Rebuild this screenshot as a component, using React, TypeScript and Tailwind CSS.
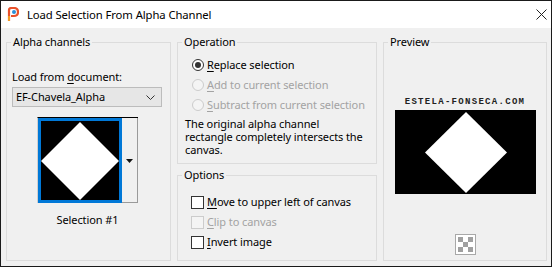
import React from "react";

const font = { fontFamily: '"Noto Sans", "Open Sans", sans-serif' };

function U({ children }: { children: React.ReactNode }) {
  return <span className="underline underline-offset-[2px]">{children}</span>;
}

function Radio({ checked, disabled }: { checked?: boolean; disabled?: boolean }) {
  return (
    <span
      className={
        "flex h-[12px] w-[12px] items-center justify-center rounded-full border " +
        (disabled ? "border-[#cccccc] bg-[#f4f4f4]" : "border-[#333333] bg-white")
      }
    >
      {checked && <span className="h-[6px] w-[6px] rounded-full bg-[#333333]" />}
    </span>
  );
}

function Check({ disabled }: { disabled?: boolean }) {
  return (
    <span
      className={
        "block h-[13px] w-[13px] border " +
        (disabled ? "border-[#cccccc] bg-[#f4f4f4]" : "border-[#333333] bg-white")
      }
    />
  );
}

function Legend({ children }: { children: React.ReactNode }) {
  return <legend className="ml-[4px] px-[2px] leading-[16px] text-black">{children}</legend>;
}

export default function App() {
  return (
    <div
      className="flex h-[267px] w-[552px] flex-col border border-[#1a1a1a] bg-[#f0f0f0] text-[11px] tracking-[-0.1px] text-black"
      style={font}
    >
      {/* Title bar */}
      <div className="flex h-[27px] items-center bg-white">
        <svg className="ml-[6px]" width="12" height="15" viewBox="0 0 12 15">
          <path d="M2 14 V3 Q2 1 5 1 H7 Q11 1 11 5 Q11 9 7 9 H4" fill="none" stroke="#e8512a" strokeWidth="2.2" />
          <circle cx="7" cy="5" r="2" fill="#2a8fd8" />
          <rect x="1" y="9" width="2" height="5" fill="#f39c24" />
        </svg>
        <span className="ml-[8px] text-[11.3px] leading-[16px]">Load Selection From Alpha Channel</span>
        <svg className="ml-auto mr-[4px]" width="11" height="11" viewBox="0 0 11 11">
          <path d="M0.5 0.5 L10.5 10.5 M10.5 0.5 L0.5 10.5" stroke="#222" strokeWidth="1" />
        </svg>
      </div>

      {/* Body */}
      <div className="flex flex-1 gap-[6px] pl-[5px] pt-[6px]">
        {/* Alpha channels */}
        <fieldset className="h-[227px] w-[165px] border border-[#dcdcdc]">
          <Legend>Alpha channels</Legend>
          <div className="ml-[5px] mt-[19px] leading-[16px]">
            Load from <U>d</U>ocument:
          </div>
          <div className="ml-[5px] mt-[2px] flex h-[20px] w-[150px] items-center border border-[#bcbcbc] bg-[#e6e6e6] pl-[3px] pr-[6px]">
            <span className="leading-[16px]">EF-Chavela_Alpha</span>
            <svg className="ml-auto" width="9" height="5" viewBox="0 0 9 5">
              <path d="M0.5 0.5 L4.5 4.5 L8.5 0.5" fill="none" stroke="#333" strokeWidth="1" />
            </svg>
          </div>
          <div className="ml-[30px] mt-[10px] flex h-[86px] w-[101px] border-t border-l border-t-black border-l-[#cfcfcf]">
            <div className="h-full w-[84px] border-[3px] border-[#0078d7] bg-black">
              <svg width="78" height="79" viewBox="0 0 78 79" className="block">
                <polygon points="39,1 78,40 39,79 0,40" fill="white" />
              </svg>
            </div>
            <div className="flex flex-1 items-start justify-center border-r border-b border-[#9a9a9a] bg-[#f0f0f0] pt-[41px]">
              <svg width="7" height="4" viewBox="0 0 7 4">
                <polygon points="0,0 7,0 3.5,4" fill="#111" />
              </svg>
            </div>
          </div>
          <div className="mt-[9px] pr-[2px] text-center leading-[16px]">Selection #1</div>
        </fieldset>

        {/* Middle column */}
        <div className="flex w-[200px] flex-col gap-[3px]">
          <fieldset className="h-[130px] border border-[#dcdcdc]">
            <Legend>Operation</Legend>
            <div className="mt-[5px] flex flex-col">
              <div className="flex h-[20px] items-center gap-[3px] pl-[14px]">
                <Radio checked />
                <span className="leading-[16px]">
                  <U>R</U>eplace selection
                </span>
              </div>
              <div className="flex h-[20px] items-center gap-[3px] pl-[14px] text-[#a3a3a3]">
                <Radio disabled />
                <span className="leading-[16px]">
                  <U>A</U>dd to current selection
                </span>
              </div>
              <div className="flex h-[20px] items-center gap-[3px] pl-[14px] text-[#a3a3a3]">
                <Radio disabled />
                <span className="leading-[16px]">
                  <U>S</U>ubtract from current selection
                </span>
              </div>
            </div>
            <div className="ml-[7px] mt-[2px] leading-[13px]">
              <div>The original alpha channel</div>
              <div>rectangle completely intersects the</div>
              <div>canvas.</div>
            </div>
          </fieldset>
          <fieldset className="h-[94px] border border-[#dcdcdc]">
            <Legend>Options</Legend>
            <div className="mt-[9px] flex flex-col">
              <div className="flex h-[20px] items-center gap-[3px] pl-[13px]">
                <Check />
                <span className="leading-[16px]">
                  <U>M</U>ove to upper left of canvas
                </span>
              </div>
              <div className="flex h-[20px] items-center gap-[3px] pl-[13px] text-[#a3a3a3]">
                <Check disabled />
                <span className="leading-[16px]">
                  <U>C</U>lip to canvas
                </span>
              </div>
              <div className="flex h-[20px] items-center gap-[3px] pl-[13px]">
                <Check />
                <span className="leading-[16px]">
                  <U>I</U>nvert image
                </span>
              </div>
            </div>
          </fieldset>
        </div>

        {/* Preview */}
        <fieldset className="h-[227px] w-[164px] border border-[#dcdcdc]">
          <Legend>Preview</Legend>
          <div
            className="mt-[46px] text-center text-[9px] font-semibold leading-[12px] tracking-[1.3px] text-[#222]"
            style={{ fontFamily: '"Liberation Mono", "DejaVu Sans Mono", monospace' }}
          >
            ESTELA-FONSECA.COM
          </div>
          <div className="mx-auto mt-[2px] h-[84px] w-[141px] bg-black">
            <svg width="141" height="84" viewBox="0 0 141 84" className="block">
              <polygon points="71,2 112,42.5 71,83 30,42.5" fill="white" />
            </svg>
          </div>
          <div className="mx-auto mt-[40px] h-[21px] w-[21px] border border-[#a8a8a8] bg-white p-[2px]">
            <svg width="15" height="15" viewBox="0 0 15 15" className="block">
              <rect x="0" y="0" width="5" height="5" fill="#a0a0a0" />
              <rect x="10" y="0" width="5" height="5" fill="#a0a0a0" />
              <rect x="5" y="5" width="5" height="5" fill="#a0a0a0" />
              <rect x="0" y="10" width="5" height="5" fill="#a0a0a0" />
              <rect x="10" y="10" width="5" height="5" fill="#a0a0a0" />
            </svg>
          </div>
        </fieldset>
      </div>
    </div>
  );
}
